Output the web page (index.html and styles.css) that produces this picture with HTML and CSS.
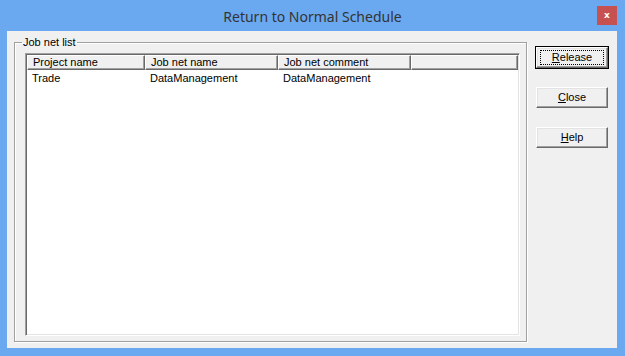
FILE: index.html
```html
<!DOCTYPE html>
<html lang="en">
<head>
    <meta charset="UTF-8">
    <title>Return to Normal Schedule</title>
    <link rel="stylesheet" href="styles.css">
</head>
<body>
    <div class="window">
        <div class="titlebar">
            <span></span>
            <span class="title">Return to Normal Schedule</span>
            <button class="close-x" type="button">x</button>
        </div>
        <div class="client">
            <fieldset class="group">
                <legend>Job net list</legend>
                <div class="list">
                    <div class="list-header">
                        <div class="hcell col1">Project name</div>
                        <div class="hcell col2">Job net name</div>
                        <div class="hcell col3">Job net comment</div>
                        <div class="hcell col4"></div>
                    </div>
                    <div class="list-row">
                        <div class="cell col1">Trade</div>
                        <div class="cell col2">DataManagement</div>
                        <div class="cell col3">DataManagement</div>
                    </div>
                </div>
            </fieldset>
            <div class="buttons">
                <button class="btn default" type="button"><span class="focus"><u>R</u>elease</span></button>
                <button class="btn" type="button"><span><u>C</u>lose</span></button>
                <button class="btn" type="button"><span><u>H</u>elp</span></button>
            </div>
        </div>
    </div>
</body>
</html>
```

FILE: styles.css
```css
body {
    margin: 0;
    background: #6aa9f0;
    font-family: 'Liberation Sans', Arial, sans-serif;
    font-size: 11px;
    color: #000;
}
.window {
    width: 625px;
    height: 356px;
    display: flex;
    flex-direction: column;
}
.titlebar {
    height: 31px;
    display: grid;
    grid-template-columns: 1fr auto 1fr;
}
.title {
    font-family: 'Noto Sans', sans-serif;
    font-size: 14px;
    color: #333;
    line-height: 33px;
}
.close-x {
    justify-self: end;
    align-self: start;
    margin: 6px 8px 0 0;
    width: 20px;
    height: 19px;
    padding: 0;
    border: none;
    background: #c75050;
    color: #fff;
    font-family: 'DejaVu Sans', sans-serif;
    font-weight: bold;
    font-size: 9px;
    line-height: 17px;
}
.client {
    flex: 1;
    margin: 0 8px 8px 7px;
    padding: 5px 0 6px 7px;
    background: #f0f0f0;
    display: flex;
}
.group {
    box-sizing: border-box;
    width: 513px;
    margin: 0;
    padding: 4px 6px 5px 10px;
    border: 1px solid #a0a0a0;
    box-shadow: inset 1px 1px 0 #fff, 1px 1px 0 #fff;
    display: flex;
    flex-direction: column;
    min-width: 0;
}
.group legend {
    margin-left: -3px;
    padding: 0 1px;
    line-height: 13px;
}
.list {
    flex: 1;
    background: #fff;
    border: 1px solid;
    border-color: #a0a0a0 #fff #fff #a0a0a0;
    padding: 1px;
    box-shadow: inset 1px 1px 0 #696969, inset -1px -1px 0 #e3e3e3;
    display: flex;
    flex-direction: column;
}
.list-header {
    display: flex;
    height: 15px;
    background: #f0f0f0;
}
.hcell {
    box-sizing: border-box;
    height: 15px;
    padding-left: 5px;
    line-height: 13px;
    border-top: 1px solid #fff;
    border-left: 1px solid #fff;
    border-right: 1px solid #696969;
    border-bottom: 1px solid #696969;
    box-shadow: inset -1px -1px 0 #a0a0a0;
    white-space: nowrap;
}
.col1 { width: 118px; }
.col2 { width: 133px; }
.col3 { width: 133px; }
.hcell.col4 { width: 107px; }
.list-row {
    display: flex;
    height: 16px;
    line-height: 16px;
}
.cell {
    box-sizing: border-box;
    padding-left: 5px;
    white-space: nowrap;
}
.buttons {
    display: flex;
    flex-direction: column;
    gap: 19px;
    margin: 11px 0 0 9px;
}
.btn {
    box-sizing: border-box;
    width: 72px;
    height: 21px;
    padding: 0;
    background: #f0f0f0;
    font-family: inherit;
    font-size: 11px;
    color: #000;
    border: 1px solid;
    border-color: #fff #696969 #696969 #fff;
    box-shadow: inset -1px -1px 0 #a0a0a0, inset 1px 1px 0 #e3e3e3;
    display: flex;
    align-items: center;
    justify-content: center;
}
.btn.default {
    outline: 1px solid #000;
    outline-offset: 0;
}
.btn span {
    line-height: 13px;
}
.btn .focus {
    box-sizing: border-box;
    width: 64px;
    height: 15px;
    border: 1px dotted #000;
    line-height: 13px;
    text-align: center;
}
```
